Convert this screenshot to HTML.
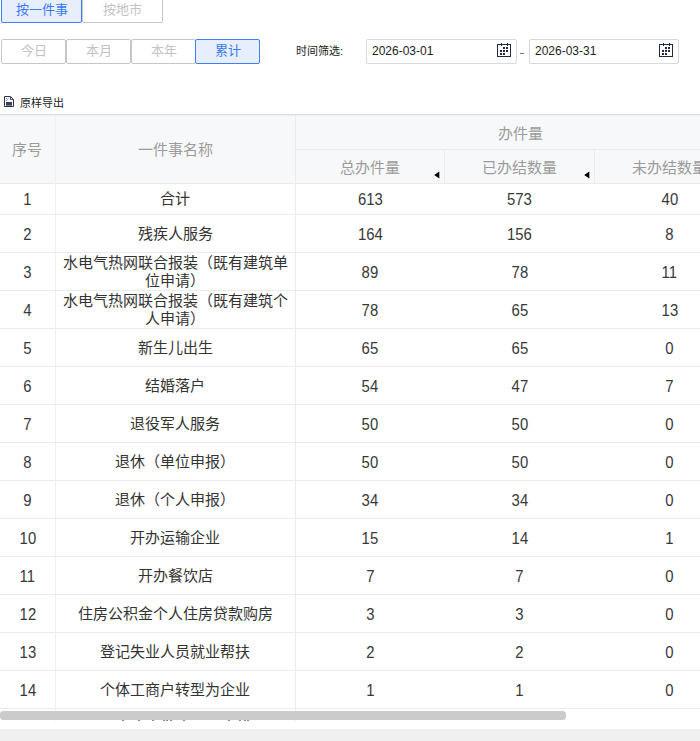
<!DOCTYPE html><html lang="zh-CN"><head><meta charset="utf-8"><style>
*{box-sizing:border-box;margin:0;padding:0}
html,body{width:700px;height:741px;overflow:hidden;background:#fff}
body{position:relative;font-family:"Liberation Sans",sans-serif;color:#333}
.a{position:absolute}
.btn{position:absolute;height:25px;border:1px solid #c6c6c6;border-radius:2px;background:#fff;color:#c2c2c2;font-size:13px;line-height:23px;text-align:center;white-space:nowrap}
.on{border-color:#3f7ef2;background:#e7eefd;color:#3b79ef;z-index:2}
.inp{position:absolute;top:39px;height:25px;border:1px solid #d6d9e0;border-radius:2px;font-size:12px;line-height:23px;padding-left:5px;color:#222}
.inp svg{display:block}
.hl{position:absolute;height:1px;background:#ebebeb}
.vl{position:absolute;width:1px;background:#ebebeb}
.c{position:absolute;display:flex;align-items:center;justify-content:center;text-align:center;white-space:nowrap}
.h{color:#9b9b9b;font-size:15px}
.d{color:#333;font-size:15px;line-height:18px}
.n{display:inline-block;font-size:16px;transform:translateY(1px) scale(0.93,1.06);color:#383838}
.tri{position:absolute;top:171px;width:0;height:0;border-top:3.5px solid transparent;border-bottom:3.5px solid transparent;border-right:5px solid #000}
</style></head><body>
<div class="btn on" style="left:1px;top:-3px;width:81px;height:26px;line-height:23px">按一件事</div>
<div class="btn" style="left:82px;top:-3px;width:81px;height:26px;line-height:23px">按地市</div>
<div class="btn" style="left:1px;top:39px;width:65px;line-height:22px">今日</div>
<div class="btn" style="left:66px;top:39px;width:65px;line-height:22px">本月</div>
<div class="btn" style="left:131px;top:39px;width:65px;line-height:22px">本年</div>
<div class="btn on" style="left:195px;top:39px;width:65px;line-height:22px">累计</div>
<div class="a" style="left:296px;top:43px;font-size:11px;line-height:16px;color:#222">时间筛选:</div>
<div class="inp" style="left:366px;width:151px">2026-03-01<span style="position:absolute;left:130px;top:3px;line-height:0"><svg width="15" height="14" viewBox="0 0 15 14"><g fill="none" stroke="#1f2940" stroke-width="1"><rect x="0.5" y="1.5" width="13" height="12"/><line x1="4.5" y1="0" x2="4.5" y2="3"/><line x1="10.5" y1="0" x2="10.5" y2="3"/></g><g fill="#1f2940"><rect x="6" y="4" width="2" height="2"/><rect x="9" y="4" width="2" height="2"/><rect x="3" y="7" width="2" height="2"/><rect x="6" y="7" width="2" height="2"/><rect x="9" y="7" width="2" height="2"/><rect x="3" y="10" width="2" height="2"/><rect x="6" y="10" width="2" height="2"/></g></svg></span></div>
<div class="a" style="left:520px;top:53px;width:4px;height:1px;background:#777"></div>
<div class="inp" style="left:529px;width:150px">2026-03-31<span style="position:absolute;left:129px;top:3px;line-height:0"><svg width="15" height="14" viewBox="0 0 15 14"><g fill="none" stroke="#1f2940" stroke-width="1"><rect x="0.5" y="1.5" width="13" height="12"/><line x1="4.5" y1="0" x2="4.5" y2="3"/><line x1="10.5" y1="0" x2="10.5" y2="3"/></g><g fill="#1f2940"><rect x="6" y="4" width="2" height="2"/><rect x="9" y="4" width="2" height="2"/><rect x="3" y="7" width="2" height="2"/><rect x="6" y="7" width="2" height="2"/><rect x="9" y="7" width="2" height="2"/><rect x="3" y="10" width="2" height="2"/><rect x="6" y="10" width="2" height="2"/></g></svg></span></div>
<div class="a" style="left:4px;top:96px;line-height:0"><svg width="10" height="11" viewBox="0 0 10 11"><path d="M0.5 0.5H6.5L9.5 3.5V10.5H0.5Z" fill="#fff" stroke="#2a3148"/><path d="M6.5 1V3.5H9" fill="none" stroke="#3a4a78"/><rect x="2" y="2" width="1" height="1" fill="#6b86c9"/><rect x="3" y="3" width="1" height="1" fill="#c98a6b"/><rect x="2" y="4" width="1" height="1" fill="#8aa0d0"/><rect x="4" y="2" width="1" height="1" fill="#9fb6e0"/><rect x="2" y="6" width="6" height="3" fill="#3b4258"/><rect x="2" y="9" width="6" height="1" fill="#7a8090"/></svg></div>
<div class="a" style="left:20px;top:95px;font-size:11px;line-height:16px;color:#222">原样导出</div>
<div class="a" style="left:0;top:114px;width:700px;height:70px;background:#f7f8fa"></div>
<div class="hl" style="left:0;top:114px;width:700px;background:#dcdee3"></div>
<div class="hl" style="left:0;top:115px;width:700px;background:#eeeff1"></div>
<div class="hl" style="left:295px;top:149px;width:405px"></div>
<div class="hl" style="left:0;top:183px;width:700px"></div>
<div class="vl" style="left:55px;top:115px;height:606px;background:#f0f0f0"></div>
<div class="vl" style="left:295px;top:115px;height:606px"></div>
<div class="vl" style="left:444px;top:150px;height:34px"></div>
<div class="vl" style="left:594px;top:150px;height:34px"></div>
<div class="c h" style="left:-1px;top:114px;width:55px;height:68px">序号</div>
<div class="c h" style="left:56px;top:114px;width:239px;height:68px">一件事名称</div>
<div class="c h" style="left:296px;top:115px;width:448px;height:34px">办件量</div>
<div class="c h" style="left:296px;top:150px;width:148px;height:33px">总办件量</div>
<div class="c h" style="left:445px;top:150px;width:149px;height:33px">已办结数量</div>
<div class="c h" style="left:595px;top:150px;width:149px;height:33px">未办结数量</div>
<div class="a" style="left:434px;top:171px"><svg width="6" height="8" viewBox="0 0 6 8" style="display:block"><polygon points="0.2,4 5.3,0.4 5.3,7.6" fill="#000"/></svg></div>
<div class="a" style="left:584px;top:171px"><svg width="6" height="8" viewBox="0 0 6 8" style="display:block"><polygon points="0.2,4 5.3,0.4 5.3,7.6" fill="#000"/></svg></div>
<div class="c d" style="left:0;top:184px;width:55px;height:30px"><span class="n">1</span></div>
<div class="c d" style="left:56px;top:184px;width:238px;height:30px">合计</div>
<div class="c d" style="left:296px;top:184px;width:148px;height:30px"><span class="n">613</span></div>
<div class="c d" style="left:445px;top:184px;width:149px;height:30px"><span class="n">573</span></div>
<div class="c d" style="left:595px;top:184px;width:149px;height:30px"><span class="n">40</span></div>
<div class="hl" style="left:0;top:214px;width:700px"></div>
<div class="c d" style="left:0;top:215px;width:55px;height:37px"><span class="n">2</span></div>
<div class="c d" style="left:56px;top:215px;width:238px;height:37px">残疾人服务</div>
<div class="c d" style="left:296px;top:215px;width:148px;height:37px"><span class="n">164</span></div>
<div class="c d" style="left:445px;top:215px;width:149px;height:37px"><span class="n">156</span></div>
<div class="c d" style="left:595px;top:215px;width:149px;height:37px"><span class="n">8</span></div>
<div class="hl" style="left:0;top:252px;width:700px"></div>
<div class="c d" style="left:0;top:253px;width:55px;height:37px"><span class="n">3</span></div>
<div class="c d" style="left:56px;top:253px;width:238px;height:37px">水电气热网联合报装（既有建筑单<br>位申请）</div>
<div class="c d" style="left:296px;top:253px;width:148px;height:37px"><span class="n">89</span></div>
<div class="c d" style="left:445px;top:253px;width:149px;height:37px"><span class="n">78</span></div>
<div class="c d" style="left:595px;top:253px;width:149px;height:37px"><span class="n">11</span></div>
<div class="hl" style="left:0;top:290px;width:700px"></div>
<div class="c d" style="left:0;top:291px;width:55px;height:37px"><span class="n">4</span></div>
<div class="c d" style="left:56px;top:291px;width:238px;height:37px">水电气热网联合报装（既有建筑个<br>人申请）</div>
<div class="c d" style="left:296px;top:291px;width:148px;height:37px"><span class="n">78</span></div>
<div class="c d" style="left:445px;top:291px;width:149px;height:37px"><span class="n">65</span></div>
<div class="c d" style="left:595px;top:291px;width:149px;height:37px"><span class="n">13</span></div>
<div class="hl" style="left:0;top:328px;width:700px"></div>
<div class="c d" style="left:0;top:329px;width:55px;height:37px"><span class="n">5</span></div>
<div class="c d" style="left:56px;top:329px;width:238px;height:37px">新生儿出生</div>
<div class="c d" style="left:296px;top:329px;width:148px;height:37px"><span class="n">65</span></div>
<div class="c d" style="left:445px;top:329px;width:149px;height:37px"><span class="n">65</span></div>
<div class="c d" style="left:595px;top:329px;width:149px;height:37px"><span class="n">0</span></div>
<div class="hl" style="left:0;top:366px;width:700px"></div>
<div class="c d" style="left:0;top:367px;width:55px;height:37px"><span class="n">6</span></div>
<div class="c d" style="left:56px;top:367px;width:238px;height:37px">结婚落户</div>
<div class="c d" style="left:296px;top:367px;width:148px;height:37px"><span class="n">54</span></div>
<div class="c d" style="left:445px;top:367px;width:149px;height:37px"><span class="n">47</span></div>
<div class="c d" style="left:595px;top:367px;width:149px;height:37px"><span class="n">7</span></div>
<div class="hl" style="left:0;top:404px;width:700px"></div>
<div class="c d" style="left:0;top:405px;width:55px;height:37px"><span class="n">7</span></div>
<div class="c d" style="left:56px;top:405px;width:238px;height:37px">退役军人服务</div>
<div class="c d" style="left:296px;top:405px;width:148px;height:37px"><span class="n">50</span></div>
<div class="c d" style="left:445px;top:405px;width:149px;height:37px"><span class="n">50</span></div>
<div class="c d" style="left:595px;top:405px;width:149px;height:37px"><span class="n">0</span></div>
<div class="hl" style="left:0;top:442px;width:700px"></div>
<div class="c d" style="left:0;top:443px;width:55px;height:37px"><span class="n">8</span></div>
<div class="c d" style="left:56px;top:443px;width:238px;height:37px">退休（单位申报）</div>
<div class="c d" style="left:296px;top:443px;width:148px;height:37px"><span class="n">50</span></div>
<div class="c d" style="left:445px;top:443px;width:149px;height:37px"><span class="n">50</span></div>
<div class="c d" style="left:595px;top:443px;width:149px;height:37px"><span class="n">0</span></div>
<div class="hl" style="left:0;top:480px;width:700px"></div>
<div class="c d" style="left:0;top:481px;width:55px;height:37px"><span class="n">9</span></div>
<div class="c d" style="left:56px;top:481px;width:238px;height:37px">退休（个人申报）</div>
<div class="c d" style="left:296px;top:481px;width:148px;height:37px"><span class="n">34</span></div>
<div class="c d" style="left:445px;top:481px;width:149px;height:37px"><span class="n">34</span></div>
<div class="c d" style="left:595px;top:481px;width:149px;height:37px"><span class="n">0</span></div>
<div class="hl" style="left:0;top:518px;width:700px"></div>
<div class="c d" style="left:0;top:519px;width:55px;height:37px"><span class="n">10</span></div>
<div class="c d" style="left:56px;top:519px;width:238px;height:37px">开办运输企业</div>
<div class="c d" style="left:296px;top:519px;width:148px;height:37px"><span class="n">15</span></div>
<div class="c d" style="left:445px;top:519px;width:149px;height:37px"><span class="n">14</span></div>
<div class="c d" style="left:595px;top:519px;width:149px;height:37px"><span class="n">1</span></div>
<div class="hl" style="left:0;top:556px;width:700px"></div>
<div class="c d" style="left:0;top:557px;width:55px;height:37px"><span class="n">11</span></div>
<div class="c d" style="left:56px;top:557px;width:238px;height:37px">开办餐饮店</div>
<div class="c d" style="left:296px;top:557px;width:148px;height:37px"><span class="n">7</span></div>
<div class="c d" style="left:445px;top:557px;width:149px;height:37px"><span class="n">7</span></div>
<div class="c d" style="left:595px;top:557px;width:149px;height:37px"><span class="n">0</span></div>
<div class="hl" style="left:0;top:594px;width:700px"></div>
<div class="c d" style="left:0;top:595px;width:55px;height:37px"><span class="n">12</span></div>
<div class="c d" style="left:56px;top:595px;width:238px;height:37px">住房公积金个人住房贷款购房</div>
<div class="c d" style="left:296px;top:595px;width:148px;height:37px"><span class="n">3</span></div>
<div class="c d" style="left:445px;top:595px;width:149px;height:37px"><span class="n">3</span></div>
<div class="c d" style="left:595px;top:595px;width:149px;height:37px"><span class="n">0</span></div>
<div class="hl" style="left:0;top:632px;width:700px"></div>
<div class="c d" style="left:0;top:633px;width:55px;height:37px"><span class="n">13</span></div>
<div class="c d" style="left:56px;top:633px;width:238px;height:37px">登记失业人员就业帮扶</div>
<div class="c d" style="left:296px;top:633px;width:148px;height:37px"><span class="n">2</span></div>
<div class="c d" style="left:445px;top:633px;width:149px;height:37px"><span class="n">2</span></div>
<div class="c d" style="left:595px;top:633px;width:149px;height:37px"><span class="n">0</span></div>
<div class="hl" style="left:0;top:670px;width:700px"></div>
<div class="c d" style="left:0;top:671px;width:55px;height:37px"><span class="n">14</span></div>
<div class="c d" style="left:56px;top:671px;width:238px;height:37px">个体工商户转型为企业</div>
<div class="c d" style="left:296px;top:671px;width:148px;height:37px"><span class="n">1</span></div>
<div class="c d" style="left:445px;top:671px;width:149px;height:37px"><span class="n">1</span></div>
<div class="c d" style="left:595px;top:671px;width:149px;height:37px"><span class="n">0</span></div>
<div class="hl" style="left:0;top:708px;width:700px"></div>
<div class="a" style="left:122px;top:720px;width:2px;height:1px;background:#888;z-index:4"></div>
<div class="a" style="left:138px;top:720px;width:2px;height:1px;background:#888;z-index:4"></div>
<div class="a" style="left:152px;top:720px;width:2px;height:1px;background:#888;z-index:4"></div>
<div class="a" style="left:163px;top:720px;width:2px;height:1px;background:#888;z-index:4"></div>
<div class="a" style="left:166px;top:720px;width:2px;height:1px;background:#888;z-index:4"></div>
<div class="a" style="left:170px;top:720px;width:2px;height:1px;background:#888;z-index:4"></div>
<div class="a" style="left:183px;top:720px;width:2px;height:1px;background:#888;z-index:4"></div>
<div class="a" style="left:228px;top:720px;width:2px;height:1px;background:#888;z-index:4"></div>
<div class="a" style="left:239px;top:720px;width:2px;height:1px;background:#888;z-index:4"></div>
<div class="a" style="left:244px;top:720px;width:2px;height:1px;background:#888;z-index:4"></div>
<div class="a" style="left:247px;top:720px;width:2px;height:1px;background:#888;z-index:4"></div>
<div class="a" style="left:0;top:711px;width:566px;height:9px;border-radius:3.5px;background:#cbcbcb;z-index:3"></div>
<div class="a" style="left:0;top:721px;width:700px;height:8px;background:#fff;z-index:3"></div>
<div class="a" style="left:0;top:729px;width:700px;height:12px;background:#f0f0f0;z-index:3"></div>
</body></html>
